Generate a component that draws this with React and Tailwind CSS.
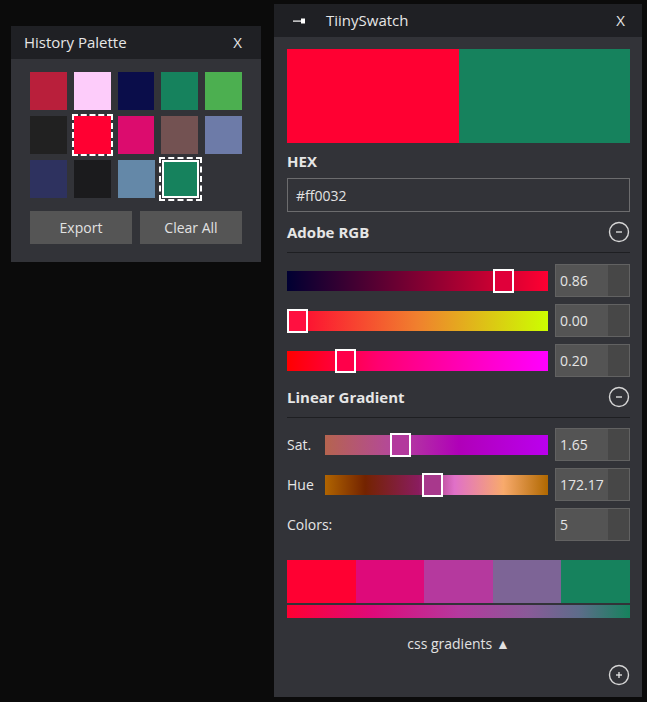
import React from "react";

const history = [
  ["#b91f3b", "#fdccfa", "#0a0d4a", "#16825d", "#4caf50"],
  ["#212121", "#ff0032", "#dc0c6e", "#735252", "#6d7ba8"],
  ["#2e325f", "#1b1b1d", "#6488a8", "#16825d"],
];

const CircleIcon = ({ plus }) => (
  <svg width="22" height="22" viewBox="0 0 22 22">
    <circle cx="11" cy="11" r="9.5" fill="none" stroke="#d6d6d6" strokeWidth="1.4" />
    <line x1="8" y1="11" x2="14" y2="11" stroke="#e8e8e8" strokeWidth="1.3" />
    {plus && <line x1="11" y1="8" x2="11" y2="14" stroke="#e8e8e8" strokeWidth="1.3" />}
  </svg>
);

const NumBox = ({ value }) => (
  <div className="flex h-[33px] w-[75px] shrink-0 border border-[#626262] bg-[#545454]">
    <div className="flex flex-1 items-center pl-[4px] text-[14px] text-[#e4e4e4]">{value}</div>
    <div className="w-[21px] bg-[#474747]" />
  </div>
);

const Slider = ({ gradient, pos, thumb }) => (
  <div className={`relative h-[20px] flex-1 ${gradient}`}>
    <div
      className="absolute top-[-2px] h-[24px] w-[21px] border-2 border-white"
      style={{ left: pos, background: thumb }}
    />
  </div>
);

const SectionHead = ({ title }) => (
  <>
    <div className="mt-[9px] flex h-[22px] items-center justify-between">
      <span className="text-[15px] font-bold text-[#e6e6e6]">{title}</span>
      <CircleIcon />
    </div>
    <div className="mt-[9px] h-px bg-[#1e1f22]" />
  </>
);

export default function App() {
  return (
    <div className="relative h-[702px] w-full overflow-hidden bg-[#0b0b0b] font-['Open_Sans',sans-serif] text-[14px] text-[#e6e6e6]">
      {/* History Palette window */}
      <div className="absolute left-[11px] top-[26px] flex h-[236px] w-[250px] flex-col bg-[#323338]">
        <div className="flex h-[33px] items-center justify-between bg-[#1f2024] pl-[13px] pr-[19px]">
          <span className="text-[15px]">History Palette</span>
          <span className="text-[15px]">X</span>
        </div>
        <div className="px-[19px] pt-[13px]">
          <div className="flex flex-col gap-[6px]">
            {history.map((row, r) => (
              <div key={r} className="flex gap-[7px]">
                {row.map((c, i) => {
                  const selected = r === 1 && i === 1;
                  const current = r === 2 && i === 3;
                  return (
                    <div
                      key={i}
                      className={`h-[38px] w-[37px] ${
                        selected ? "outline-2 outline-dashed outline-white" : ""
                      } ${current ? "border-2 border-white outline-2 outline-offset-1 outline-dashed outline-white" : ""}`}
                      style={{ background: c }}
                    />
                  );
                })}
              </div>
            ))}
          </div>
          <div className="mt-[13px] flex gap-[8px]">
            <button className="h-[33px] w-[102px] bg-[#555555] text-[14px] text-[#e2e2e2]">Export</button>
            <button className="h-[33px] w-[102px] bg-[#555555] text-[14px] text-[#e2e2e2]">Clear All</button>
          </div>
        </div>
      </div>

      {/* TiinySwatch window */}
      <div className="absolute left-[274px] top-[4px] flex h-[693px] w-[368px] flex-col bg-[#323338]">
        <div className="flex h-[33px] items-center bg-[#1f2024] pl-[19px] pr-[17px]">
          <svg width="13" height="6" viewBox="0 0 13 6">
            <rect x="0" y="2.5" width="9" height="1.2" fill="#ffffff" />
            <rect x="8" y="0.5" width="4" height="5" fill="#ffffff" />
          </svg>
          <span className="ml-[20px] text-[15px]">TiinySwatch</span>
          <span className="ml-auto text-[15px]">X</span>
        </div>

        <div className="flex flex-1 flex-col px-[13px] pr-[12px]">
          <div className="mt-[12px] flex h-[94px]">
            <div className="flex-1 bg-[#ff0032]" />
            <div className="flex-1 bg-[#16825d]" />
          </div>

          <div className="mt-[7px] text-[15px] font-bold leading-[22px]">HEX</div>
          <div className="mt-[6px] flex h-[34px] items-center border border-[#6c6c6e] pl-[8px] text-[14px] text-[#e2e2e2]">
            #ff0032
          </div>

          <SectionHead title="Adobe RGB" />

          <div className="mt-[11px] flex flex-col gap-[7px]">
            <div className="flex items-center gap-[7px]">
              <Slider gradient="bg-[linear-gradient(to_right,#000032,#ff0032)]" pos="206px" thumb="#e0003a" />
              <NumBox value="0.86" />
            </div>
            <div className="flex items-center gap-[7px]">
              <Slider gradient="bg-[linear-gradient(to_right,#ff0032,#f0802e_50%,#ccff00)]" pos="0px" thumb="#ff1040" />
              <NumBox value="0.00" />
            </div>
            <div className="flex items-center gap-[7px]">
              <Slider gradient="bg-[linear-gradient(to_right,#ff0000,#ff0070_35%,#ff00ff)]" pos="48px" thumb="#ff004a" />
              <NumBox value="0.20" />
            </div>
          </div>

          <SectionHead title="Linear Gradient" />

          <div className="mt-[10px] flex flex-col gap-[7px]">
            <div className="flex items-center gap-[7px]">
              <span className="w-[31px] text-[14px]">Sat.</span>
              <Slider
                gradient="bg-[linear-gradient(to_right,#b5644f,#b4489a_30%,#b000b8_60%,#bb00ee)]"
                pos="65px"
                thumb="#b3399d"
              />
              <NumBox value="1.65" />
            </div>
            <div className="flex items-center gap-[7px]">
              <span className="w-[31px] text-[14px]">Hue</span>
              <Slider
                gradient="bg-[linear-gradient(to_right,#b06400,#732300_18%,#8a1c5e_42%,#e070c8_58%,#f8aa6c_80%,#b06800)]"
                pos="97px"
                thumb="#a8388c"
              />
              <NumBox value="172.17" />
            </div>
            <div className="flex items-center gap-[7px]">
              <span className="flex-1 text-[14px]">Colors:</span>
              <NumBox value="5" />
            </div>
          </div>

          <div className="mt-[19px] flex h-[43px]">
            <div className="flex-1 bg-[#ff0032]" />
            <div className="flex-1 bg-[#de0a7a]" />
            <div className="flex-1 bg-[#b5399e]" />
            <div className="flex-1 bg-[#7d6496]" />
            <div className="flex-1 bg-[#16825d]" />
          </div>
          <div className="mt-[2px] h-[13px] bg-[linear-gradient(to_right,#ff0032,#de0a7a_25%,#b5399e_50%,#8a5a98_70%,#5e6c8a_85%,#16825d)]" />

          <div className="mt-[16px] text-center text-[14px] leading-[20px] text-[#e2e2e2]">css gradients ▲</div>

          <div className="mt-auto mb-[11px] flex justify-end">
            <CircleIcon plus />
          </div>
        </div>
      </div>
    </div>
  );
}
